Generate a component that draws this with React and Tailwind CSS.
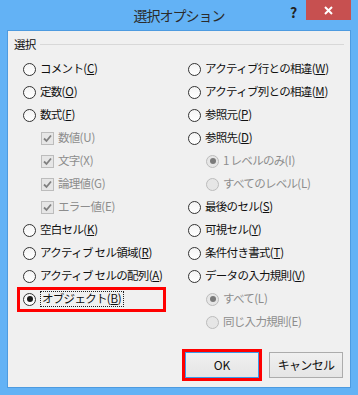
import React from 'react';

const font = "font-['Noto_Sans_CJK_JP','Noto_Sans',sans-serif]";

function Radio({ checked, disabled }) {
  return (
    <span className={`flex items-center justify-center w-[13px] h-[13px] shrink-0 rounded-full border ${disabled ? 'border-[#bcbcbc] bg-[#e6e6e6]' : 'border-[#333333] bg-gradient-to-b from-[#f4f4f4] to-white'}`}>
      {checked && <span className={`w-[6px] h-[6px] rounded-full ${disabled ? 'bg-[#7a7a7a]' : 'bg-[#1a1a1a]'}`} />}
    </span>
  );
}

function Check() {
  return (
    <span className="flex items-center justify-center w-[13px] h-[13px] shrink-0 border border-[#bcbcbc] bg-[#e6e6e6]">
      <svg width="9" height="9" viewBox="0 0 9 9">
        <path d="M1 4.5 L3.5 7 L8 1.5" fill="none" stroke="#808080" strokeWidth="1.8" />
      </svg>
    </span>
  );
}

function Label({ text, k, disabled }) {
  if (disabled) return <span className="text-[#8d8d8d]">{text}<span className="tracking-[-0.2px]">({k})</span></span>;
  return <span className="text-[#111]">{text}<span className="tracking-[-0.2px]">(<u>{k}</u>)</span></span>;
}

function Row({ type = 'radio', text, k, checked, disabled, indent, children }) {
  return (
    <div className={`relative flex items-center h-[23px] gap-[4px] ${indent ? 'pl-[18px]' : ''}`}>
      {type === 'check' ? <Check /> : <Radio checked={checked} disabled={disabled} />}
      {children || <Label text={text} k={k} disabled={disabled} />}
    </div>
  );
}

export default function App() {
  return (
    <div className={`w-[358px] h-[395px] bg-[#63b2f5] flex flex-col ${font} text-[11.5px] tracking-[-0.7px] leading-none`}>
      {/* title bar */}
      <div className="relative h-[30px] flex items-center justify-center shrink-0">
        <span className="text-[14px] tracking-[-1px] text-[#2b2b2b] pb-[1px]">選択オプション</span>
        <span className="absolute left-[290px] top-[5px] text-[14px] font-bold text-[#222] tracking-normal">?</span>
        <div className="absolute left-[306px] top-0 w-[45px] h-[20px] bg-[#c75050] flex items-center justify-center">
          <svg width="9" height="9" viewBox="0 0 9 9">
            <path d="M1 1 L8 8 M8 1 L1 8" stroke="white" strokeWidth="2" />
          </svg>
        </div>
      </div>

      {/* client area */}
      <div className="ml-[7px] w-[344px] h-[358px] border border-[#4d9be0] bg-[#f0f0f0] flex flex-col">
        <div className="flex items-center pl-[6px] pr-[6px] pt-[8px] gap-[4px]">
          <span className="text-[#111]">選択</span>
          <div className="flex-1 h-px bg-[#d8d8d8]" />
        </div>

        <div className="grid grid-cols-[165px_1fr] pl-[15px] mt-[7px]">
          <div className="flex flex-col">
            <Row text="コメント" k="C" />
            <Row text="定数" k="O" />
            <Row text="数式" k="F" />
            <Row type="check" indent text="数値" k="U" disabled />
            <Row type="check" indent text="文字" k="X" disabled />
            <Row type="check" indent text="論理値" k="G" disabled />
            <Row type="check" indent text="エラー値" k="E" disabled />
            <Row text="空白セル" k="K" />
            <Row text="アクティブ セル領域" k="R" />
            <Row text="アクティブ セルの配列" k="A" />
            <Row checked>
              <span className="border border-dotted border-[#222] px-[1px] py-[1px] text-[#111]">オブジェクト<span className="tracking-[-0.2px]">(<u>B</u>)</span></span>
              <div className="absolute left-[-6px] top-[-1px] w-[149px] h-[25px] border-[3px] border-[#ff0000]" />
            </Row>
          </div>
          <div className="flex flex-col">
            <Row text="アクティブ行との相違" k="W" />
            <Row text="アクティブ列との相違" k="M" />
            <Row text="参照元" k="P" />
            <Row text="参照先" k="D" />
            <Row indent checked disabled text="1 レベルのみ" k="I" />
            <Row indent disabled text="すべてのレベル" k="L" />
            <Row text="最後のセル" k="S" />
            <Row text="可視セル" k="Y" />
            <Row text="条件付き書式" k="T" />
            <Row text="データの入力規則" k="V" />
            <Row indent checked disabled text="すべて" k="L" />
            <Row indent disabled text="同じ入力規則" k="E" />
          </div>
        </div>

        <div className="mt-auto flex justify-end gap-[10px] pr-[7px] pb-[9px]">
          <button className="w-[74px] h-[26px] border border-[#3c9ae8] bg-gradient-to-b from-[#f0f0f0] to-[#e5e5e5] text-[#111] text-[12px] tracking-normal outline-[3px] outline-solid outline-[#ff0000]">OK</button>
          <button className="w-[74px] h-[26px] border border-[#acacac] bg-gradient-to-b from-[#f0f0f0] to-[#e5e5e5] text-[#111] text-[12px] tracking-[-0.7px]">キャンセル</button>
        </div>
      </div>
    </div>
  );
}
